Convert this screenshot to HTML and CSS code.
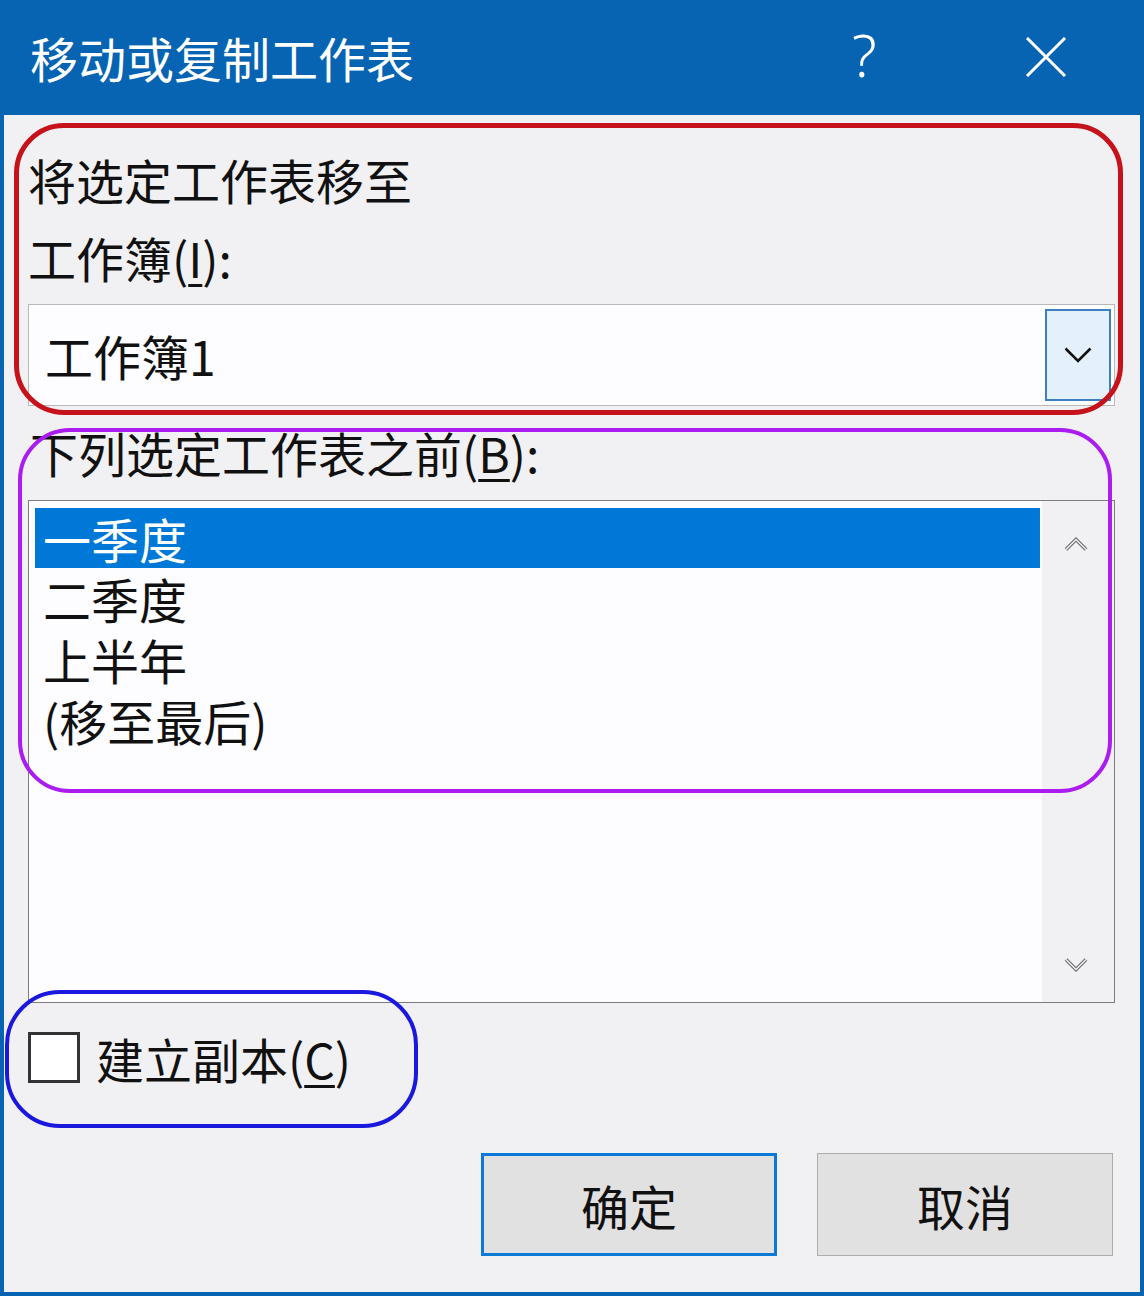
FILE: index.html
```html
<!DOCTYPE html>
<html>
<head>
    <meta charset="utf-8">
    <link rel="stylesheet" href="styles.css">
</head>
<body>
<div class="window">
    <div class="titlebar">
        <span class="title">移动或复制工作表</span>
        <span class="help">?</span>
        <svg class="close" width="42" height="40" viewBox="0 0 42 40">
            <path d="M2 1 L40 39 M40 1 L2 39" stroke="#fff" stroke-width="3" fill="none"/>
        </svg>
    </div>

    <div class="content">
        <div class="label first">将选定工作表移至</div>
        <div class="label second">工作簿(<u>I</u>):</div>

        <div class="combo">
            <span class="combo-text">工作簿1</span>
            <div class="combo-btn">
                <svg width="28" height="16" viewBox="0 0 28 16">
                    <path d="M1.5 1.5 L14 14 L26.5 1.5" stroke="#111" stroke-width="2.6" fill="none"/>
                </svg>
            </div>
        </div>

        <div class="label third">下列选定工作表之前(<u>B</u>):</div>

        <div class="listbox">
            <div class="items">
                <div class="item selected">一季度</div>
                <div class="item">二季度</div>
                <div class="item">上半年</div>
                <div class="item">(移至最后)</div>
            </div>
            <div class="scrollbar">
                <svg class="arrow" width="24" height="14" viewBox="0 0 24 14">
                    <polyline points="2,12.5 12,2.5 22,12.5" stroke="#6c6c6c" stroke-width="3.6" fill="none"/>
                    <polyline points="2,12.5 12,2.5 22,12.5" stroke="#f4f3f5" stroke-width="1.4" fill="none"/>
                </svg>
                <svg class="arrow" width="24" height="14" viewBox="0 0 24 14">
                    <polyline points="2,1.5 12,11.5 22,1.5" stroke="#6c6c6c" stroke-width="3.6" fill="none"/>
                    <polyline points="2,1.5 12,11.5 22,1.5" stroke="#f4f3f5" stroke-width="1.4" fill="none"/>
                </svg>
            </div>
        </div>

        <div class="check-row">
            <span class="checkbox"></span>
            <span class="check-label">建立副本(<u>C</u>)</span>
        </div>

        <div class="buttons">
            <div class="button default">确定</div>
            <div class="button">取消</div>
        </div>

        <!-- annotation marks drawn over the dialog -->
        <div class="mark mark-red"></div>
        <div class="mark mark-purple"></div>
        <div class="mark mark-blue"></div>
    </div>
</div>
</body>
</html>
```

FILE: styles.css
```css
body {
    margin: 0;
    font-family: "Noto Sans CJK SC", "Noto Sans", sans-serif;
    color: #111;
}

.window {
    width: 1144px;
    height: 1296px;
    background: #0664b2;
    display: flex;
    flex-direction: column;
}

.titlebar {
    height: 115px;
    flex: none;
    display: flex;
    align-items: center;
    padding-left: 30px;
    color: #fff;
}

.title {
    font-size: 48px;
    line-height: 60px;
    margin-top: -2px;
}

.help {
    font-family: "Noto Sans", sans-serif;
    font-weight: 300;
    font-size: 58px;
    line-height: 60px;
    margin-left: 438px;
    margin-top: -6px;
}

.close {
    margin-left: 148px;
    margin-top: -2px;
}

.content {
    flex: 1;
    margin: 0 4px 4px;
    background: #f1f0f2;
    position: relative;
    padding: 34px 0 0 24px;
}

.label {
    font-size: 48px;
    line-height: 60px;
}

.second {
    margin-top: 18px;
}

.third {
    margin-top: 16px;
    margin-left: 2px;
}

u {
    text-decoration-thickness: 3px;
    text-underline-offset: 6px;
}

.combo {
    margin-top: 17px;
    width: 1087px;
    height: 102px;
    box-sizing: border-box;
    border: 1px solid #b9b9b9;
    background: #fdfcfe;
    display: flex;
    align-items: center;
    justify-content: space-between;
}

.combo-text {
    font-size: 48px;
    line-height: 60px;
    padding-left: 16px;
}

.combo-btn {
    width: 66px;
    height: 92px;
    box-sizing: border-box;
    margin-right: 3px;
    border: 2px solid #3d7fbf;
    background: #e4f0fb;
    display: flex;
    align-items: center;
    justify-content: center;
}

.listbox {
    margin-top: 18px;
    width: 1087px;
    height: 503px;
    box-sizing: border-box;
    border: 1px solid #7c7c7c;
    background: #fdfcfe;
    display: flex;
}

.items {
    flex: 1;
    padding: 7px 2px 0 6px;
}

.item {
    height: 61px;
    font-size: 48px;
    line-height: 61px;
    padding-left: 8px;
}

.selected {
    background: #0078d7;
    color: #fff;
    height: 60px;
    line-height: 60px;
}

.scrollbar {
    width: 72px;
    background: #f1f0f2;
    display: flex;
    flex-direction: column;
    justify-content: space-between;
    align-items: center;
    padding: 36px 4px 30px 0;
    box-sizing: border-box;
}

.check-row {
    margin-top: 29px;
    height: 51px;
    display: flex;
    align-items: flex-start;
}

.checkbox {
    width: 52px;
    height: 51px;
    box-sizing: border-box;
    border: 3px solid #333;
    background: #fff;
}

.check-label {
    font-size: 48px;
    line-height: 60px;
    margin-left: 16px;
    margin-top: -4px;
}

.buttons {
    margin-top: 70px;
    display: flex;
    gap: 40px;
    margin-left: 453px;
}

.button {
    width: 296px;
    height: 103px;
    box-sizing: border-box;
    border: 1px solid #adadad;
    background: #e1e1e1;
    font-size: 48px;
    display: flex;
    align-items: center;
    justify-content: center;
}

.default {
    border: 3px solid #0a7ad6;
}

.mark {
    position: absolute;
    box-sizing: border-box;
}

.mark-red {
    left: 10px;
    top: 8px;
    width: 1109px;
    height: 292px;
    border: 5px solid #c5121b;
    border-radius: 50px;
}

.mark-purple {
    left: 14px;
    top: 313px;
    width: 1094px;
    height: 365px;
    border: 4px solid #ab1cf0;
    border-radius: 52px;
}

.mark-blue {
    left: 1px;
    top: 875px;
    width: 413px;
    height: 138px;
    border: 4px solid #1a18de;
    border-radius: 55px;
}
```
